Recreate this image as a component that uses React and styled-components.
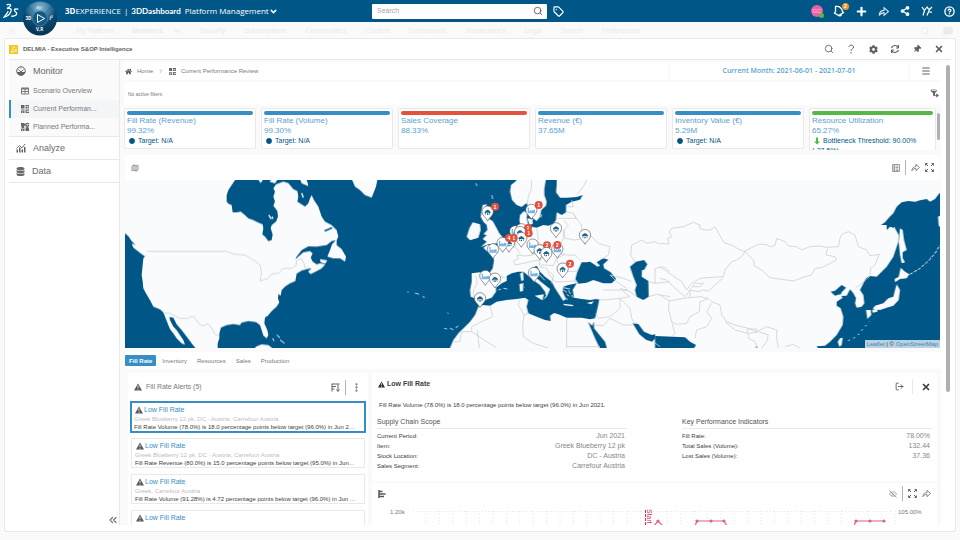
import React from "react"
import styled, { createGlobalStyle } from "styled-components"
import {
  FaHome,
  FaDatabase,
  FaCog,
  FaThumbtack,
  FaTable,
  FaCircle,
  FaShareAlt,
} from "react-icons/fa"
import {
  Search,
  Tag,
  Plus,
  ChevronDown,
  ChevronRight,
  ChevronsLeft,
  CircleHelp,
  X,
  Menu,
  Map as MapIcon,
  LogOut,
  EyeOff,
  MessageSquare,
  EllipsisVertical,
} from "lucide-react"

const GlobalStyle = createGlobalStyle`
  :root {
    --clr-brand: #005686;
    --clr-blue: #368ec4;
    --clr-title: #5b9fd0;
    --clr-red: #e4513d;
    --clr-green: #57b847;
    --clr-grey: #77797c;
    --clr-dark: #3d3d3d;
    --clr-soft: #fafafa;
    --clr-line: #e9e9ea;
  }
  * { box-sizing: border-box; }
  body {
    margin: 0;
    background: var(--clr-soft);
    color: var(--clr-grey);
    font-family: "Liberation Sans", Arial, sans-serif;
    font-size: 7px;
    line-height: 10px;
    overflow: hidden;
  }
  button {
    margin: 0;
    padding: 0;
    border: 0;
    background: none;
    color: inherit;
    font: inherit;
    display: inline-flex;
    align-items: center;
    justify-content: center;
  }
  a { color: inherit; text-decoration: none; }
  h1, h2, h3, p, dl, dd, ul { margin: 0; padding: 0; font-size: inherit; font-weight: normal; }
  ul { list-style: none; }
  svg { display: block; flex: none; }
`

const Page = styled.div`
  height: 100vh;
  display: grid;
  grid-template-rows: 22px 16px minmax(0, 1fr) 8px;
`

const TopBar = styled.header`
  background: var(--clr-brand);
  color: #fff;
  display: grid;
  grid-template-columns: 372px 175px auto 1fr;
  align-items: center;
`

const Brand = styled.div`
  display: flex;
  align-items: center;
  padding-left: 3px;
  gap: 4px;
  font-family: "Open Sans", sans-serif;
  font-size: 8px;
  white-space: nowrap;

  h1 {
    display: flex;
    gap: 3px;
    margin-left: 2px;
  }

  b {
    font-weight: 700;
  }
`

const AppName = styled.b`
  font-family: Lato, sans-serif;
`

const CompassButton = styled.button`
  position: relative;
  z-index: 3;
  width: 36px;
  height: 22px;

  svg {
    position: absolute;
    top: 0;
    left: 0;
  }
`

const SearchBox = styled.label`
  display: flex;
  align-items: center;
  height: 15px;
  padding: 0 4px 0 5px;
  border-radius: 1px;
  background: #fff;
  color: #555;

  input {
    flex: 1;
    min-width: 0;
    border: 0;
    padding: 0;
    outline: 0;
    background: none;
    font: inherit;
  }

  input::placeholder {
    color: #a5a5a5;
  }
`

const TagButton = styled.button`
  margin-left: 6px;
`

const TopActions = styled.div`
  display: flex;
  justify-content: flex-end;
  align-items: center;
  gap: 10px;
  padding-right: 5px;

  button {
    width: 12px;
    height: 14px;
    position: relative;
  }
`

const Avatar = styled.span`
  display: flex;
  align-items: center;
  justify-content: center;
  width: 12px;
  height: 12px;
  border-radius: 50%;
  background: #ec5fa1;
  color: #ffd0e5;
  font-size: 6px;

  &::after {
    content: "";
    position: absolute;
    right: -1px;
    bottom: 0;
    width: 5px;
    height: 5px;
    border-radius: 50%;
    background: var(--clr-green);
  }
`

const Bubble = styled.span`
  position: absolute;
  top: -1px;
  right: -4px;
  width: 7px;
  height: 7px;
  border-radius: 50%;
  background: #e8962e;
  font-size: 5px;
  line-height: 7px;
  font-weight: bold;
`

const PlatformMenu = styled.nav`
  display: flex;
  align-items: center;
  padding: 1px 7px 0 8px;
  color: #ebebeb;
  white-space: nowrap;

  ul {
    flex: 1;
    display: flex;
    gap: 19px;
    margin-left: 60px;
  }

  li {
    display: flex;
    align-items: center;
    gap: 10px;
  }

  > svg + svg {
    margin-left: 13px;
  }
`

const Widget = styled.main`
  margin: 0 4px;
  border: 1px solid var(--clr-line);
  border-radius: 2px;
  background: #fff;
  display: grid;
  grid-template-rows: 21px minmax(0, 1fr) 6px;
`

const WidgetHead = styled.div`
  display: flex;
  align-items: center;
  gap: 5px;
  margin: 0 4px;
  border-bottom: 1px solid var(--clr-line);

  h2 {
    flex: 1;
    font-size: 6px;
    font-weight: bold;
    color: #606266;
  }
`

const WidgetTools = styled.div`
  display: flex;
  gap: 10px;
  padding-right: 6px;
  color: #5c5e61;

  button {
    width: 12px;
    height: 12px;
  }
`

const WidgetBody = styled.div`
  display: grid;
  grid-template-columns: 111px minmax(0, 1fr) 14px;
  padding-left: 4px;
  min-height: 0;
`

const Sidebar = styled.nav`
  display: flex;
  flex-direction: column;
  border-right: 1px solid var(--clr-line);
`

const Group = styled.div`
  background: ${({ $open }) => ($open ? "var(--clr-soft)" : "#fff")};
  border-bottom: 1px solid var(--clr-line);
`

const GroupLink = styled.a`
  display: flex;
  align-items: center;
  gap: 7px;
  height: 22px;
  padding-left: 7px;
  font-size: 9px;
  color: #686a6d;
`

const PageLink = styled.a`
  display: flex;
  align-items: center;
  gap: 4px;
  height: 18px;
  padding-left: 10px;
  border-left: 2px solid ${({ $active }) => ($active ? "var(--clr-blue)" : "transparent")};
  background: ${({ $active }) => ($active ? "#f3f5f7" : "none")};
`

const Collapse = styled.button`
  align-self: flex-end;
  margin: auto 0 0;
  height: 11px;
`

const Dashboard = styled.div`
  overflow: hidden;
  background: var(--clr-soft);
  padding-left: 4px;
`

const Crumbs = styled.div`
  display: grid;
  grid-template-columns: minmax(0, 1fr) 238px 31px;
  gap: 2px;
  height: 18px;
  margin-top: 2px;

  > * {
    display: flex;
    align-items: center;
    background: #fff;
  }
`

const CrumbPath = styled.nav`
  gap: 5px;
  padding-left: 1px;
  font-size: 6px;
`

const Period = styled.span`
  justify-content: center;
  font-family: "Open Sans", sans-serif;
  font-size: 7px;
  font-weight: 600;
  color: var(--clr-title);
`

const MenuButton = styled.button`
  color: #606266;
`

const Filters = styled.div`
  display: flex;
  justify-content: space-between;
  align-items: center;
  height: 23px;
  margin-top: 2px;
  padding: 0 2px 0 4px;
  background: #fff;
  font-size: 5px;
`

const KpiRow = styled.div`
  display: grid;
  grid-template-columns: minmax(0, 1fr) 5px;
  height: 42px;
  margin-top: 3px;
  overflow: hidden;
`

const KpiGrid = styled.div`
  display: grid;
  grid-template-columns: repeat(5, minmax(0, 132fr)) minmax(0, 127fr);
  gap: 5px;
`

const Kpi = styled.article`
  height: ${({ $tall }) => ($tall ? "52px" : "41px")};
  padding: 2px;
  border: 1px solid var(--clr-line);
  border-radius: 2px;
  background: #fff;
  color: var(--clr-title);
  font-size: 8px;
  white-space: nowrap;

  &::before {
    content: "";
    display: block;
    height: 4px;
    border-radius: 2px;
    background: ${({ $color }) => $color};
  }

  h3 {
    margin-top: 1px;
  }
`

const Target = styled.p`
  display: flex;
  align-items: center;
  gap: 3px;
  padding-left: ${({ $flush }) => ($flush ? "0" : "2px")};
  font-size: 7px;
  color: var(--clr-brand);
`

const ScrollTrack = styled.div`
  display: flex;
  flex-direction: column;
  align-items: center;
  justify-content: space-between;
  padding: 3px 0 2px;
`

const ScrollThumb = styled.div`
  flex: 0 0 ${({ $size }) => $size};
  width: ${({ $thin }) => ($thin ? "3px" : "4px")};
  margin: 2px 0 auto;
  border-radius: 2px;
  background: #afb0b4;
`

const MapCard = styled.section`
  margin: 5px 1px 0 1px;
  background: #fff;
`

const Toolbar = styled.div`
  display: flex;
  align-items: center;
  justify-content: space-between;
  height: ${({ $height }) => $height};
  padding: 0 6px;
`

const Tools = styled.div`
  display: flex;
  align-items: center;
  gap: ${({ $wide }) => ($wide ? "8px" : "5px")};
`

const Rule = styled.i`
  width: 1px;
  height: 15px;
  background: ${({ $light }) => ($light ? "var(--clr-line)" : "#b2b3b5")};
`

const MapView = styled.div`
  position: relative;
  height: 168px;
  background: var(--clr-brand);

  > svg {
    width: 100%;
    height: 100%;
  }
`

const Attribution = styled.p`
  position: absolute;
  right: 0;
  bottom: 0;
  padding: 0 2px;
  background: #b9d2e0;
  color: #333;
  font-size: 6px;
  line-height: 8px;

  a {
    color: #3b87b9;
  }
`

const Tabs = styled.div`
  display: flex;
  align-items: center;
  height: 17px;
  margin: 4px 0 0 1px;
  background: #fff;
`

const Tab = styled.button`
  height: 11px;
  padding: 0 4px;
  margin-right: 2px;
  border-radius: 1px;
  font-size: 6px;
  font-weight: ${({ $active }) => ($active ? "bold" : "normal")};
  color: ${({ $active }) => ($active ? "#fff" : "inherit")};
  background: ${({ $active }) => ($active ? "var(--clr-blue)" : "none")};
`

const Split = styled.div`
  display: grid;
  grid-template-columns: 240px minmax(0, 1fr);
  gap: 4px;
  margin: 4px 4px 0 4px;
`

const Panel = styled.section`
  background: #fff;
`

const PanelTitle = styled.h3`
  display: flex;
  align-items: center;
  gap: 4px;
`

const AlertCard = styled.a`
  display: block;
  height: ${({ $active }) => ($active ? "32px" : "30px")};
  margin: ${({ $active }) => ($active ? "0 2px 5px" : "0 3px 6px")};
  padding: ${({ $active }) => ($active ? "2px" : "2px 3px")};
  border: ${({ $active }) => ($active ? "2px solid var(--clr-blue)" : "1px solid var(--clr-line)")};
  font-size: 6px;
  color: #bcbcbc;

  h4 {
    display: flex;
    align-items: center;
    gap: 1px;
    margin: 0;
    padding-left: 1px;
    font-size: 7px;
    font-weight: normal;
    color: var(--clr-blue);
  }

  p {
    padding-right: 5px;
    line-height: 8px;
    overflow: hidden;
    white-space: nowrap;
    text-overflow: ellipsis;
  }

  p + p {
    color: var(--clr-dark);
  }
`

const Detail = styled.div`
  display: grid;
  grid-template-columns: minmax(0, 1fr) auto;
  padding: 6px 6px 0;
  color: var(--clr-dark);

  h3 {
    align-self: start;
    gap: 2px;
    font-size: 7px;
    font-weight: bold;
  }
`

const Message = styled.p`
  padding: 6px 7px 0;
  font-size: 6px;
  color: var(--clr-dark);
`

const FactGrid = styled.div`
  display: grid;
  grid-template-columns: 250px 250px;
  justify-content: space-between;
  height: 71px;
  padding: 7px 5px 0;

  h4 {
    margin: 0 0 2px;
    padding-bottom: 1px;
    border-bottom: 1px solid var(--clr-line);
    font-size: 7px;
    font-weight: normal;
    color: #505255;
  }

  dl div {
    display: flex;
    justify-content: space-between;
    padding-right: 2px;
  }

  dt {
    font-size: 6px;
    color: var(--clr-dark);
  }

  dd {
    color: #85878a;
  }
`

const ChartPanel = styled.section`
  margin-top: 2px;
  background: #fff;

  > svg {
    width: 100%;
    height: 24px;
  }
`

const Warn = ({ size = 8, color = "#55575a" }) => (
  <svg width={size} height={size} viewBox="0 0 16 16">
    <path d="M8 1L16 15H0Z" fill={color} />
    <path d="M8 5v5M8 11.5v2" stroke="#fff" strokeWidth="1.6" />
  </svg>
)

const ShareArrow = ({ size = 10, color = "currentColor" }) => (
  <svg width={size} height={size} viewBox="0 0 20 20" fill="none" stroke={color} strokeWidth="2">
    <path d="M2 17c1-7 4-9 9-9V3l8 7-8 7v-5c-4 0-6 1-9 5z" />
  </svg>
)

const Expand = () => (
  <svg width="9" height="9" viewBox="0 0 18 18" fill="none" stroke="#606266" strokeWidth="2">
    <path d="M1 5V1h4M13 1h4v4M17 13v4h-4M5 17H1v-4M2 2l4 4M16 2l-4 4M16 16l-4-4M2 16l4-4" />
  </svg>
)

const Logo = () => (
  <svg width="16" height="16" viewBox="8 9 49 48" fill="none" stroke="#fff" strokeWidth="4">
    <path d="M19 14c9-3 16-1 10 5-2 3-5 5-9 6" />
    <path d="M20 26c9-3 17 0 11 11-4 8-11 13-20 15 5-6 10-11 13-18" />
    <path d="M55 28c-6-3-13-1-12 3 1 4 8 5 7 10-1 6-9 8-17 8" />
  </svg>
)

const Compass = () => (
  <svg width="36" height="36" viewBox="0 0 72 72">
    <defs>
      <radialGradient id="dial" cx=".5" cy=".2" r=".8">
        <stop offset="0" stopColor="#8fb9d3" />
        <stop offset=".3" stopColor="#4c87ab" />
        <stop offset=".6" stopColor="#0b466d" />
        <stop offset="1" stopColor="#053553" />
      </radialGradient>
    </defs>
    <circle cx="34" cy="37" r="34" fill="url(#dial)" />
    <path d="M11 13L57 61M57 13L11 61" stroke="#022f4c" strokeWidth="1" opacity=".5" />
    <circle cx="34" cy="37" r="15" fill="#135a82" stroke="#3f8db5" strokeWidth="1.5" />
    <path d="M29 29l14 8-14 8z" fill="none" stroke="#fff" strokeWidth="2" />
    <path d="M28 18c3-5 6-7 4-2-1 3 3 2 6-3M30 12l-3 5" stroke="#c7e0ee" strokeWidth="2" fill="none" />
    <g fill="#fff" fontSize="9" fontWeight="bold">
      <text x="5" y="40">3D</text>
      <text x="53" y="40" fontStyle="italic">i²</text>
      <text x="26" y="62">V,R</text>
    </g>
  </svg>
)

const GaugeIcon = () => (
  <svg width="10" height="10" viewBox="0 0 20 20" fill="none" stroke="#606266" strokeWidth="2">
    <circle cx="10" cy="10" r="8.500" />
    <path d="M2 13h16M10 12L5 7M10 12l5-5M10 3v2" />
    <path d="M3 14h14l-4 4H7z" fill="#606266" />
  </svg>
)

const AnalyzeIcon = () => (
  <svg width="10" height="10" viewBox="0 0 20 20" fill="none" stroke="#606266" strokeWidth="3">
    <path d="M2.500 19v-6M7.500 19V9M12.500 19v-6M17.500 19V8" />
    <path d="M1 11l6-6 5 5 6-8" strokeWidth="1.800" />
  </svg>
)

const TilesIcon = ({ size = 8, dense }) => (
  <svg width={size} height={size} viewBox="0 0 16 16" fill="#66686b">
    <path d="M0 0h7v7H0zM9 0h7v2H9zM9 3h3v4H9zM13 3h3v4h-3zM0 9h7v2H0zM0 12h3v4H0zM4 12h3v4H4zM9 9h7v7H9z" />
    {dense ? <path d="M6 2h4v3H6zM2 6h4v4H2zM11 6h3v4h-3z" /> : <path d="M11 11h5v3h-5z" fill="#ccc" />}
  </svg>
)

const FilterIcon = () => (
  <svg width="9" height="9" viewBox="0 0 18 18" fill="#66686b">
    <path d="M1 3c0-3 13-3 13 0 0 2-4 4-4 6v6l-4-2V9C6 7 1 5 1 3z" />
    <path d="M4 3h8" stroke="#fff" strokeWidth="1.500" />
    <circle cx="14" cy="13" r="2.500" />
    <path d="M14 9v8M10 13h8" stroke="#66686b" strokeWidth="1.200" />
  </svg>
)

const SheetIcon = () => (
  <svg width="8" height="8" viewBox="0 0 16 16" fill="none" stroke="#85878a" strokeWidth="1.600">
    <path d="M1 1h14v14H1zM5 1v14M7 4h6M7 7h6M7 10h6M7 13h6M2 4h2M2 8h2M2 12h2" />
  </svg>
)

const RefreshIcon = () => (
  <svg width="10" height="10" viewBox="0 0 20 20" fill="none" stroke="currentColor" strokeWidth="2.400">
    <path d="M3 8c2-6 11-7 14-1M17 12c-2 6-11 7-14 1" />
    <path d="M17 2v6h-5M3 18v-6h5" strokeWidth="2" />
  </svg>
)

const DownArrow = () => (
  <svg width="6" height="8" viewBox="0 0 12 16" fill="#57b847">
    <path d="M4 1h4v8h4l-6 6-6-6h4z" />
  </svg>
)

const SortIcon = () => (
  <svg width="9" height="9" viewBox="0 0 18 18" fill="none" stroke="#606266" strokeWidth="2">
    <path d="M1 2h16M2 2v15M2 7h8M2 12h5M14 3v13M11 13l3 4 3-4" />
  </svg>
)

const BarsIcon = () => (
  <svg width="8" height="8" viewBox="0 0 16 16" fill="none" stroke="#55575a" strokeWidth="3">
    <path d="M2 0v16M2 3h7M2 8h13M2 13h10" />
  </svg>
)

const YIcon = () => (
  <svg width="12" height="12" viewBox="0 0 24 24" fill="none" stroke="#fff" strokeWidth="2.5">
    <path d="M2 4l5 7 5-7M7 11l-3 10M13 3c-1 3 2 5 4 6l-5 12M22 4l-5 5M17 14h5" />
  </svg>
)

const BellIcon = () => (
  <svg width="12" height="12" viewBox="0 0 24 24" fill="none" stroke="#fff" strokeWidth="2.6">
    <path d="M5 3c6-1 12 2 14 10l2 2-10 6-8-5 2-3zM11 20c2 3 5 2 6-1" />
  </svg>
)

// pin centres, in map units
const pins = [
  { x: 293, y: 113, kind: "dc", count: 1 },
  { x: 424, y: 108, kind: "plant", count: 1 },
  { x: 498, y: 163, kind: "dc" },
  { x: 585, y: 183, kind: "dc" },
  { x: 376, y: 172, kind: "plant" },
  { x: 394, y: 166, kind: "dc", count: 1, bx: 20, by: -7 },
  { x: 390, y: 174, kind: "dc" },
  { x: 394, y: 192, kind: "dc", count: 1, bx: 22, by: -17 },
  { x: 357, y: 207, kind: "dc", count: 1, bx: 14 },
  { x: 338, y: 207, kind: "plant", count: 4, bx: 19 },
  { x: 309, y: 226, kind: "plant" },
  { x: 428, y: 212, kind: "plant" },
  { x: 502, y: 225, kind: "plant", count: 2, bx: 0, by: -15 },
  { x: 449, y: 229, kind: "dc", count: 2 },
  { x: 469, y: 237, kind: "dc" },
  { x: 518, y: 284, kind: "dc", count: 2 },
  { x: 432, y: 297, kind: "plant" },
  { x: 286, y: 306, kind: "plant" },
  { x: 315, y: 314, kind: "dc" },
  { x: 270, y: 373, kind: "dc" },
]

const Pin = ({ x, y, kind, count, bx = 22, by = -18 }) => (
  <g transform={`translate(${x} ${y})`}>
    <path
      d="M0 25C-5 14-17 9-17-3A17 17 0 0 1 17-3C17 9 5 14 0 25Z"
      fill="#fff"
      stroke="#4c5358"
      strokeWidth="1.8"
    />
    {kind === "dc" ? (
      <path d="M-10 0C-8-5-3-8 0-9 3-8 8-5 10 0ZM-7 0h2V6h-2zM5 0h2V6H5zM-2 2h4v5h-4z" fill="#1b6590" />
    ) : (
      <path d="M-11 7V-10h4V1l7-5v5l5-4h6V7Z" fill="#75b5ea" />
    )}
    {count ? (
      <g transform={`translate(${bx} ${by})`}>
        <circle r="12" fill="#e4513d" />
        <text y="6" textAnchor="middle" fill="#fff" fontSize="16" fontWeight="bold">
          {count}
        </text>
      </g>
    ) : null}
  </g>
)

const WorldMap = () => (
  <svg viewBox="0 0 2445 504" preserveAspectRatio="xMidYMid slice">
    <defs>
      <filter id="coast" x="0" y="0" width="100%" height="100%" filterUnits="userSpaceOnUse">
        <feTurbulence type="fractalNoise" baseFrequency="0.2" numOctaves="2" seed="4" />
        <feDisplacementMap in="SourceGraphic" scale="4" xChannelSelector="R" yChannelSelector="G" />
      </filter>
    </defs>
    <g filter="url(#coast)" fill="#fafbfd">
      {/* North America */}
      <g transform="translate(-15 -15)">
        <path d="M0 0H360L345 15 335 30 325 45 320 60 320 80 325 86 335 90 338 112 350 112 362 110 375 120 385 130 400 135 415 143 428 148 430 160 427 178 435 185 445 198 455 195 458 178 452 160 455 150 468 140 474 125 472 108 460 92 465 80 460 65 465 50 460 40 468 28 490 20 505 24 520 42 532 48 535 65 532 80 545 88 555 95 565 85 570 70 575 60 582 75 595 95 600 110 605 125 615 140 635 150 650 165 655 185 650 195 635 198 620 210 590 215 565 214 545 225 530 245 526 254 535 245 550 232 570 228 578 235 572 248 578 260 590 268 600 265 616 268 605 280 590 288 572 297 564 290 575 280 560 282 545 287 530 296 526 318 510 325 495 335 485 345 482 362 475 357 474 370 478 382 470 395 455 408 445 420 435 428 433 445 442 465 445 480 440 490 430 482 425 465 420 450 408 441 385 438 365 443 360 450 340 447 320 450 303 458 298 475 298 490 293 505 293 530H235L215 505 200 485 185 465 170 448 160 428 148 426 150 435 160 455 170 465 180 480 190 495 195 509 185 505 170 490 160 475 150 462 145 450 135 425 130 412 120 403 100 395 90 375 78 355 70 340 68 320 65 300 68 270 70 250 78 240 62 225 45 208 35 198 25 183 15 175 0 160Z" />
        <path d="M35 206L55 212 70 226 82 240 74 244 58 232 40 218ZM650 193L650 210 665 222 678 245 675 260 660 250 640 250 622 245 630 225 636 208ZM600 252l22 4-6 10-14-4zM408 515L425 508 445 510 465 525H400ZM690 0L705 35 720 45 735 60 755 68 760 55 768 35 775 0ZM535 0l10 25 20 8-4-20-8-15zM448 20l10-10 15 3-8 12zM412 10h20l-10 14z" />
        <path d="M458 490l4 8M470 480l10 8M480 495l14 10" stroke="#fafbfd" strokeWidth="3" />
        <path fill="#005686" d="M612 166L635 156 638 160 616 170ZM558 10l18 0 2 25-12-6z" />
        <path d="M545 54l5 14M446 120l8 12M456 125l3 6" stroke="#fafbfd" strokeWidth="4" />
      </g>
      {/* Europe, Africa and the Middle East */}
      <g transform="translate(795 -15)">
        <path d="M385 0L378 18 363 30 360 50 366 75 380 90 395 96 410 84 414 95 420 115 428 130 440 138 450 125 454 105 468 92 470 80 463 60 463 42 470 0Z" />
        <path d="M500 0V30L498 52 510 68 530 68 560 66 578 60 570 74 545 80 528 90 528 112 515 120 500 112 498 135 490 146 475 152 460 150 440 158 425 155 415 152 410 130 412 115 402 108 390 120 388 135 392 155 375 162 365 178 355 190 345 195 335 200 325 212 305 214 292 210 280 218 290 228 305 235 312 255 308 280 300 292 270 292 245 295 245 320 240 345 242 365 255 370 265 378 285 375 305 368 318 350 318 338 335 325 350 318 350 303 365 295 385 290 400 290 412 300 430 316 450 330 465 350 468 362 458 376 470 365 478 348 480 342 458 325 440 310 430 290 425 280 440 272 448 288 465 305 485 320 495 340 508 360 520 378 528 372 518 350 520 335 535 330 560 325 548 345 552 368 575 372 600 375 620 372 628 372 624 392 620 410 615 430 600 433 575 428 550 428 530 428 505 418 492 414 480 422 482 438 465 435 440 425 415 415 410 395 415 375 405 368 380 372 350 375 320 380 300 392 280 390 265 395 255 420 240 440 225 455 205 475 190 495 175 530H850V0Z" />
        <path d="M278 90L290 88 288 98 302 100 300 115 293 130 308 138 320 160 328 175 340 190 325 205 295 208 272 216 290 200 278 192 290 180 280 178 292 165 290 150 280 140 272 125 275 105ZM238 160L248 142 270 148 272 165 265 188 240 196 230 185ZM390 296l9-6 2 26-7 2zM388 328l12-4-1 24-9 2zM434 362l28-4-5 18zM520 386l30 4-2 4-26-3zM590 384l22-5-8 9zM412 130l16 3 0 14-10 2z" />
        <g fill="none" stroke="#fafbfd" strokeWidth="2.4">
          <path d="M258 25l3 8M305 60l3 12M52 350l4 2M75 354l12 4M98 365l6 2M172 413l3 3M163 460l8 2M180 460l10 4M197 458l8-5M455 118l-3 10M325 345l8-3M340 340l12 2M520 345l10 7M530 358l8 6M535 345l6 12M520 338l20 4M527 368l6 7M545 360l4 8M430 280l18 24M440 290l24 26" />
        </g>
        <g fill="#005686">
          <path d="M556 312L562 290 575 262 590 262 600 260 612 268 622 275 630 272 620 262 640 250 655 254 640 268 642 280 662 292 678 312 665 325 640 325 610 315 590 323 565 326ZM720 275L738 260 762 255 772 268 762 285 756 285 755 305 775 318 776 365 760 375 740 365 735 345 740 330 730 305ZM594 440L606 452 612 440 612 460 630 482 645 500 652 525H632L615 490ZM728 445L745 447 762 470 785 480 800 476 796 490 786 500 768 494 748 478ZM800 475L815 482 850 486V530L825 510 808 500Z" />
        </g>
      </g>
      {/* East Asia */}
      <g transform="translate(1605 -15)">
        <path d="M-15 0H855V50L838 55 825 72 810 80 800 72 780 76 765 80 745 78 725 82 710 95 700 115 685 130 675 142 663 150 680 150 680 165 690 155 705 160 716 180 715 200 705 230 700 245 680 275 665 290 650 305 630 303 618 310 605 335 600 345 610 360 613 385 605 395 590 398 585 385 588 370 580 355 570 343 560 362 540 363 545 352 558 338 545 330 525 347 512 350 525 362 540 358 548 368 530 380 530 392 542 400 550 425 548 450 530 480 510 500 495 512 470 514 480 530H-15Z" />
        <path d="M720 160L728 165 732 195 740 225 728 232 728 250 735 262 725 265 720 240 716 200ZM722 278L735 290 748 298 740 310 720 312 705 322 704 312 716 305ZM710 328L720 345 716 375 700 392 680 398 660 405 638 402 645 392 670 385 685 370 700 365 705 345ZM618 405L632 405 634 420 622 432ZM636 405l16-3 0 8-14 3zM540 490L548 488 545 510 538 515 533 500ZM834 125l10-5v40l-8-8z" />
        <g fill="none" stroke="#fafbfd" strokeWidth="3">
          <path d="M750 298L780 280 805 258 825 235 840 210" strokeDasharray="9 5" />
          <path d="M565 497L590 485 610 460 628 440" strokeDasharray="5 12" />
        </g>
        <path fill="#005686" d="M-15 483L40 485 75 487 90 500 108 510 95 530H-15ZM290 512l3 10-8 3z" />
      </g>
    </g>
    {/* country borders */}
    <g fill="none" stroke="#cfcfd1" strokeWidth="2.4" strokeLinejoin="round">
      <path
        transform="translate(-15 -15)"
        d="M80 229H318L345 238 375 240 400 255 420 270 425 295 420 318 445 310 455 297 475 295 490 280 515 280 528 272 530 258 545 250 552 265 555 278 568 278M130 414L150 415 180 430 205 430 210 425 222 425 238 448 250 452 265 446 278 465 285 478 297 483"
      />
      <g transform="translate(795 -15)">
        <path d="M425 15L424 40 415 65 412 85M590 15L580 35 560 60M528 95L550 95 545 75M528 110L550 115 560 130 500 130M550 115L558 130 575 150 575 175 580 190 555 195 525 190 522 165 535 150 520 135M580 190L600 180 625 205 660 215 655 240 640 250M522 165L520 190 508 215 500 235M440 160L445 190 440 200 465 215 485 225 500 232 530 240 555 240 570 255M440 200L425 210 438 230 430 240 405 243 380 240 385 250 370 258 375 270 400 265 430 258 450 255 465 240M345 198L360 210 380 220 390 235M390 160L380 185 375 215M450 255L448 270 465 270 490 272 500 250 525 238M448 275L470 280 478 300 495 320 520 320 555 318M500 255L510 275 530 290 565 288M478 290L490 300 485 325M258 302L262 325 250 345 252 368M300 294L320 302 345 308M558 325L555 312M620 372L640 375 690 370 720 365 700 350 710 340 680 320 660 300M690 340L720 350 740 365M690 370L690 400 660 425 625 430 618 415M690 370L720 400 725 430 735 447M610 450L640 452 660 430 700 450 730 450" />
        <path d="M300 392L308 425 275 440 245 455 245 470 215 470 210 500 190 500M245 470L275 490 320 519M262 465L268 519M388 375L385 390 402 420 398 450 400 485 430 505 475 519M402 420L415 415M530 428V519M530 515H630M735 262L722 240 725 210 755 195 770 205 795 200 810 208M795 325V280L820 275 840 290M776 365L800 358 840 365M775 320L795 325 840 320M660 300L700 310 725 320M640 345h75M790 500l20 15" />
      </g>
      <g transform="translate(1605 -15)">
        <path d="M0 205L28 207 22 190 35 185 28 170 35 160 70 155 100 142 120 150 118 160 135 165 150 165 165 155 180 182 192 203 215 210 240 225 255 230 245 245 230 255 215 260 195 285 190 305 155 307 120 310 95 325 80 345 65 320 35 300 0 275M255 228L295 208 318 208 330 215 345 212 350 190 375 200 385 213 410 215 425 225 450 215 480 213 500 217 535 215 540 190 545 178 565 170 585 180 595 215 620 225 630 242 658 238 645 270 632 280 630 303M255 228L282 258 282 272 305 285 330 308 400 318 435 305 455 300 465 280 485 278 530 255 525 245 498 240 503 217M585 340L605 325 630 303M0 310L20 315 40 335 75 365 90 345 105 325 130 325 120 335 100 335M90 345L115 350 130 345 145 348 190 308M90 345V368L120 365 145 370 155 380 180 390 185 420 200 440 225 450 265 460 290 470 320 455 350 465 350 490 355 519M0 360L28 378 70 370 90 368M28 378L25 400 35 440 50 448 80 445 90 425 118 410 120 380 145 370M35 440L45 475 35 485M155 385L140 410 155 430 140 455 110 465 105 490M195 440L225 465 262 475 262 462 290 462 290 472 265 475 265 490 285 500 292 519M295 470L325 480 320 500 305 519M375 515L400 508 420 519" />
      </g>
    </g>
    <g transform="translate(795 -15)">
      {pins.map((pin, i) => (
        <Pin key={i} {...pin} />
      ))}
    </g>
  </svg>
)

const platformLinks = [
  "My Platform",
  "Members",
  "Security",
  "Subscriptions",
  "Communities",
  "Content",
  "Dashboards",
  "Vocabularies",
  "Legal",
  "Search",
  "Preferences",
]

const kpis = [
  { name: "Fill Rate (Revenue)", value: "99.32%", target: "Target: N/A" },
  { name: "Fill Rate (Volume)", value: "99.30%", target: "Target: N/A" },
  { name: "Sales Coverage", value: "88.33%", color: "var(--clr-red)" },
  { name: "Revenue (€)", value: "37.65M" },
  { name: "Inventory Value (€)", value: "5.29M", target: "Target: N/A" },
  {
    name: "Resource Utilization",
    value: "65.27%",
    target: "Bottleneck Threshold: 90.00%",
    extra: "(-27.5%)",
    color: "var(--clr-green)",
  },
]

const alerts = [
  {
    scope: "Greek Blueberry 12 pk, DC - Austria, Carrefour Austria",
    text: "Fill Rate Volume (78.0%) is 18.0 percentage points below target (96.0%) in Jun 2021.",
  },
  {
    scope: "Greek Blueberry 12 pk, DC - Austria, Carrefour Austria",
    text: "Fill Rate Revenue (80.0%) is 15.0 percentage points below target (95.0%) in Jun 2021.",
  },
  {
    scope: "Greek, Carrefour Austria",
    text: "Fill Rate Volume (91.28%) is 4.72 percentage points below target (96.0%) in Jun 2021.",
  },
  { scope: "Greek, Target Austria", text: "" },
]

const facts = [
  {
    title: "Supply Chain Scope",
    rows: [
      ["Current Period:", "Jun 2021"],
      ["Item:", "Greek Blueberry 12 pk"],
      ["Stock Location:", "DC - Austria"],
      ["Sales Segment:", "Carrefour Austria"],
    ],
  },
  {
    title: "Key Performance Indicators",
    rows: [
      ["Fill Rate:", "78.00%"],
      ["Total Sales (Volume):", "132.44"],
      ["Lost Sales (Volume):", "37.36"],
    ],
  },
]

const gridLines = Array.from({ length: 36 }, (_, i) => 54 + i * 13.4)

const Chart = () => (
  <svg viewBox="0 0 565 24" preserveAspectRatio="xMidYMin slice">
    <g stroke="#e6e6e6" strokeDasharray="1 2">
      <path d="M41 7.5H520" />
      {gridLines.map(x => (
        <path key={x} d={`M${x} 7V24`} />
      ))}
    </g>
    <g fill="#77797c" fontSize="6">
      <text x="18" y="10">1.20k</text>
      <text x="526" y="10">105.00%</text>
    </g>
    <path d="M273.5 6V24" stroke="#d6336c" strokeDasharray="3 1" />
    <text transform="translate(275 5) rotate(90)" fontSize="7" fill="#d6336c">
      Start
    </text>
    <g fill="none" stroke="#dd5f98" strokeWidth="1.2">
      <path d="M282 22L286 17 291 22M323 22L325 17H352L355 22M482 22L484 17H512" />
    </g>
    <g fill="#dd5f98">
      {[286, 325, 339, 352, 484, 498, 512].map(x => (
        <circle key={x} cx={x} cy="17" r="1.6" />
      ))}
    </g>
  </svg>
)

export default function App() {
  return (
    <>
      <GlobalStyle />
      <Page>
        <TopBar>
          <Brand>
            <Logo />
            <CompassButton aria-label="Compass">
              <Compass />
            </CompassButton>
            <h1>
              <span>
                <b>3D</b>EXPERIENCE
              </span>
              <span>|</span>
              <AppName>3DDashboard</AppName>
            </h1>
            <button>
              Platform Management <ChevronDown size={9} strokeWidth={4} />
            </button>
          </Brand>
          <SearchBox>
            <input type="text" placeholder="Search" aria-label="Search" />
            <Search size={10} />
          </SearchBox>
          <TagButton aria-label="Tags">
            <Tag size={11} strokeWidth={2.5} />
          </TagButton>
          <TopActions>
            <button aria-label="Profile">
              <Avatar>GC</Avatar>
            </button>
            <button aria-label="Notifications">
              <BellIcon />
              <Bubble>2</Bubble>
            </button>
            <button aria-label="Add">
              <Plus size={13} strokeWidth={4} />
            </button>
            <button aria-label="Share">
              <ShareArrow size={11} color="#d5e5ee" />
            </button>
            <button aria-label="Network">
              <FaShareAlt size={10} transform="rotate(0)" />
            </button>
            <button aria-label="Communities">
              <YIcon />
            </button>
            <button aria-label="Help">
              <CircleHelp size={11} strokeWidth={3} />
            </button>
          </TopActions>
        </TopBar>

        <PlatformMenu>
          <Menu size={8} />
          <ul>
            {platformLinks.map(link => (
              <li key={link}>
                <a href="#platform">{link === "Members" ? <b>{link}</b> : link}</a>
                {link === "Members" ? <ChevronDown size={8} strokeWidth={4} /> : null}
              </li>
            ))}
          </ul>
          <Search size={10} />
          <MessageSquare size={10} fill="#ebebeb" />
        </PlatformMenu>

        <Widget>
          <WidgetHead>
            <svg width="9" height="9" viewBox="0 0 18 18">
              <rect width="18" height="18" rx="1" fill="#f8c51c" />
              <path d="M7 4h4L4 14h6l4-6v6" stroke="#fff" strokeWidth="1.6" fill="none" />
            </svg>
            <h2>DELMIA - Executive S&amp;OP Intelligence</h2>
            <WidgetTools>
              <button aria-label="Search">
                <Search size={10} />
              </button>
              <button aria-label="Help">
                <svg width="8" height="10" viewBox="0 0 16 20" fill="none" stroke="currentColor" strokeWidth="2">
                  <path d="M4 6c0-5 9-5 9 0 0 4-5 4-5 8M8 16v3" />
                </svg>
              </button>
              <button aria-label="Settings">
                <FaCog size={9} />
              </button>
              <button aria-label="Refresh">
                <RefreshIcon />
              </button>
              <button aria-label="Pin">
                <FaThumbtack size={8} transform="rotate(45)" />
              </button>
              <button aria-label="Close">
                <X size={10} strokeWidth={4} />
              </button>
            </WidgetTools>
          </WidgetHead>

          <WidgetBody>
            <Sidebar>
              <Group $open>
                <GroupLink href="#monitor">
                  <GaugeIcon /> Monitor
                </GroupLink>
                <PageLink href="#scenario">
                  <FaTable size={8} /> Scenario Overview
                </PageLink>
                <PageLink href="#current" $active>
                  <TilesIcon /> Current Performan...
                </PageLink>
                <PageLink href="#planned">
                  <TilesIcon dense /> Planned Performa...
                </PageLink>
              </Group>
              <Group>
                <GroupLink href="#analyze">
                  <AnalyzeIcon /> Analyze
                </GroupLink>
              </Group>
              <Group>
                <GroupLink href="#data">
                  <FaDatabase size={9} /> Data
                </GroupLink>
              </Group>
              <Collapse aria-label="Collapse menu">
                <ChevronsLeft size={12} strokeWidth={2.5} />
              </Collapse>
            </Sidebar>

            <Dashboard>
              <Crumbs>
                <CrumbPath>
                  <FaHome size={7} color="#55575a" />
                  <a href="#home">Home</a>
                  <ChevronRight size={6} />
                  <TilesIcon size={7} />
                  <span>Current Performance Review</span>
                </CrumbPath>
                <Period>Current Month: 2021-06-01 - 2021-07-01</Period>
                <MenuButton aria-label="Menu">
                  <Menu size={10} strokeWidth={2.5} />
                </MenuButton>
              </Crumbs>

              <Filters>
                No active filters
                <button aria-label="Filters">
                  <FilterIcon />
                </button>
              </Filters>

              <KpiRow>
                <KpiGrid>
                  {kpis.map(kpi => (
                    <Kpi key={kpi.name} $color={kpi.color || "var(--clr-blue)"} $tall={!!kpi.extra}>
                      <h3>{kpi.name}</h3>
                      <p>{kpi.value}</p>
                      {kpi.target ? (
                        <Target>
                          {kpi.extra ? <DownArrow /> : <FaCircle size={6} />}
                          {kpi.target}
                        </Target>
                      ) : null}
                      {kpi.extra ? <Target $flush>{kpi.extra}</Target> : null}
                    </Kpi>
                  ))}
                </KpiGrid>
                <ScrollTrack>
                  <ScrollThumb $size="27px" $thin />
                </ScrollTrack>
              </KpiRow>

              <MapCard>
                <Toolbar $height="25px">
                  <MapIcon size={8} strokeWidth={2.5} />
                  <Tools>
                    <SheetIcon />
                    <Rule />
                    <ShareArrow size={9} />
                    <Expand />
                  </Tools>
                </Toolbar>
                <MapView>
                  <WorldMap />
                  <Attribution>
                    <a href="#leaflet">Leaflet</a> | © <a href="#osm">OpenStreetMap</a>
                  </Attribution>
                </MapView>
              </MapCard>

              <Tabs>
                <Tab $active>Fill Rate</Tab>
                <Tab>Inventory</Tab>
                <Tab>Resources</Tab>
                <Tab>Sales</Tab>
                <Tab>Production</Tab>
              </Tabs>

              <Split>
                <Panel>
                  <Toolbar $height="28px">
                    <PanelTitle>
                      <Warn /> Fill Rate Alerts (5)
                    </PanelTitle>
                    <Tools>
                      <SortIcon />
                      <Rule />
                      <EllipsisVertical size={11} strokeWidth={3} />
                    </Tools>
                  </Toolbar>
                  {alerts.map((alert, i) => (
                    <AlertCard key={i} href="#alert" $active={i === 0}>
                      <h4>
                        <Warn /> Low Fill Rate
                      </h4>
                      <p>{alert.scope}</p>
                      <p>{alert.text}</p>
                    </AlertCard>
                  ))}
                </Panel>

                <div>
                  <Panel>
                    <Detail>
                      <PanelTitle>
                        <Warn size={7} color="#2b2b2b" /> Low Fill Rate
                      </PanelTitle>
                      <Tools $wide>
                        <LogOut size={9} />
                        <Rule $light />
                        <button aria-label="Close alert">
                          <X size={10} strokeWidth={4} />
                        </button>
                      </Tools>
                    </Detail>
                    <Message>
                      Fill Rate Volume (78.0%) is 18.0 percentage points below target (96.0%) in Jun
                      2021.
                    </Message>
                    <FactGrid>
                      {facts.map(fact => (
                        <div key={fact.title}>
                          <h4>{fact.title}</h4>
                          <dl>
                            {fact.rows.map(([label, value]) => (
                              <div key={label}>
                                <dt>{label}</dt>
                                <dd>{value}</dd>
                              </div>
                            ))}
                          </dl>
                        </div>
                      ))}
                    </FactGrid>
                  </Panel>
                  <ChartPanel>
                    <Toolbar $height="21px">
                      <BarsIcon />
                      <Tools>
                        <EyeOff size={8} />
                        <Rule />
                        <Expand />
                        <ShareArrow size={9} />
                      </Tools>
                    </Toolbar>
                    <Chart />
                  </ChartPanel>
                </div>
              </Split>
            </Dashboard>

            <ScrollTrack>
              <ScrollThumb $size="71%" />
            </ScrollTrack>
          </WidgetBody>
        </Widget>
      </Page>
    </>
  )
}
